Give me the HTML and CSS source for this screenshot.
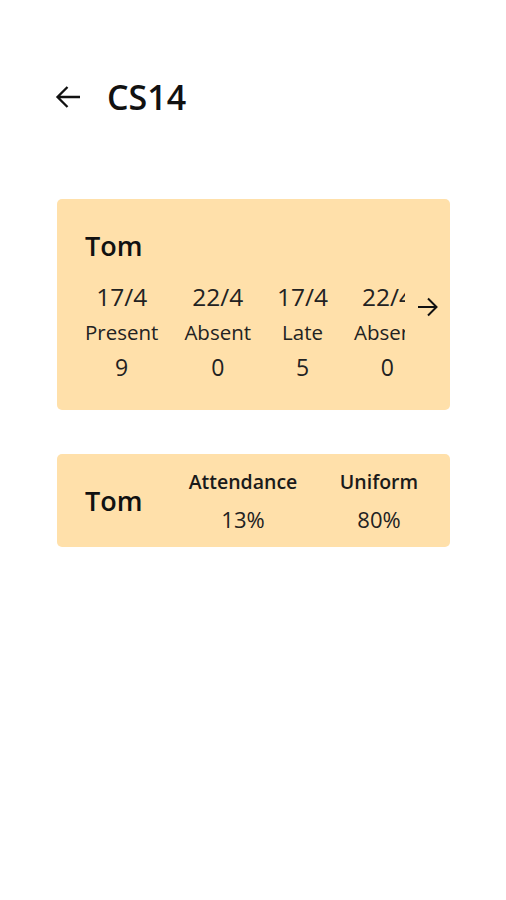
FILE: index.html
```html
<!DOCTYPE html>
<html lang="en">
<head>
  <meta charset="UTF-8" />
  <meta name="viewport" content="width=device-width, initial-scale=1.0"/>
  <title>CS14</title>
  <link rel="stylesheet" href="styles.css">
</head>
<body>

  <!-- Top Bar -->
  <header class="top-bar">
    <a href="#" class="back-btn" aria-label="Back">
      <svg width="26" height="24" viewBox="0 0 26 24"><path d="M25 12H2.5M12.5 2L2.5 12l10 10" fill="none" stroke="#111" stroke-width="2.3"/></svg>
    </a>
    <h1 class="title">CS14</h1>
  </header>

  <!-- Attendance History Card -->
  <div class="card history-card">
    <h2 class="student-name">Tom</h2>
    <div class="history-row">
      <div class="day-list">
        <div class="day">
          <span class="day-date">17/4</span>
          <span class="day-status">Present</span>
          <span class="day-count">9</span>
        </div>
        <div class="day">
          <span class="day-date">22/4</span>
          <span class="day-status">Absent</span>
          <span class="day-count">0</span>
        </div>
        <div class="day">
          <span class="day-date">17/4</span>
          <span class="day-status">Late</span>
          <span class="day-count">5</span>
        </div>
        <div class="day">
          <span class="day-date">22/4</span>
          <span class="day-status">Absent</span>
          <span class="day-count">0</span>
        </div>
      </div>
      <a href="#" class="next-btn" aria-label="More">
        <svg width="22" height="22" viewBox="0 0 22 22"><path d="M1 11h18.5M11 2.5l8.5 8.5-8.5 8.5" fill="none" stroke="#111" stroke-width="2"/></svg>
      </a>
    </div>
  </div>

  <!-- Summary Card -->
  <div class="card summary-card">
    <h2 class="student-name">Tom</h2>
    <div class="stat">
      <span class="stat-label">Attendance</span>
      <span class="stat-value">13%</span>
    </div>
    <div class="stat">
      <span class="stat-label">Uniform</span>
      <span class="stat-value">80%</span>
    </div>
  </div>

</body>
</html>
```

FILE: styles.css
```css
body {
  margin: 0;
  font-family: "Open Sans", "Noto Sans", sans-serif;
  background-color: #ffffff;
  color: #1a1a1a;
}

/* Top Bar */
.top-bar {
  display: flex;
  align-items: center;
  padding: 74px 0 0 55px;
  height: 46px;
}

.back-btn {
  display: flex;
  width: 26px;
  height: 24px;
}

.title {
  margin: 0 0 0 26px;
  font-size: 34px;
  font-weight: 600;
  line-height: 46px;
  color: #111;
}

/* Cards */
.card {
  margin: 0 56px 0 57px;
  background-color: #ffe0aa;
  border-radius: 5px;
}

.student-name {
  margin: 0;
  font-size: 27px;
  font-weight: 600;
  line-height: 36px;
  color: #111;
}

.history-card {
  margin-top: 79px;
  height: 211px;
  box-sizing: border-box;
  padding: 29px 0 0 28px;
}

.history-row {
  display: flex;
  align-items: flex-start;
  margin-top: 12px;
}

.day-list {
  display: flex;
  gap: 26px;
  width: 320px;
  padding-top: 4px;
  overflow: hidden;
}

.day {
  display: flex;
  flex-direction: column;
  align-items: center;
  flex-shrink: 0;
}

.day-date {
  font-size: 24.5px;
  line-height: 34px;
  color: #222;
}

.day-status {
  margin-top: 3px;
  font-size: 20.5px;
  line-height: 30px;
  color: #222;
}

.day-count {
  margin-top: 4px;
  font-size: 23px;
  line-height: 32px;
  color: #222;
}

.next-btn {
  display: flex;
  margin: 20px 0 0 12px;
}

.summary-card {
  margin-top: 44px;
  height: 93px;
  display: flex;
  align-items: center;
  padding-left: 28px;
}

.summary-card .student-name {
  width: 98px;
}

.stat {
  display: flex;
  flex-direction: column;
  align-items: center;
  width: 120px;
}

.stat + .stat {
  margin-left: 16px;
}

.stat-label {
  font-size: 19.5px;
  font-weight: 600;
  line-height: 28px;
}

.stat-value {
  margin-top: 8px;
  font-size: 22px;
  line-height: 30px;
  color: #222;
}
```
